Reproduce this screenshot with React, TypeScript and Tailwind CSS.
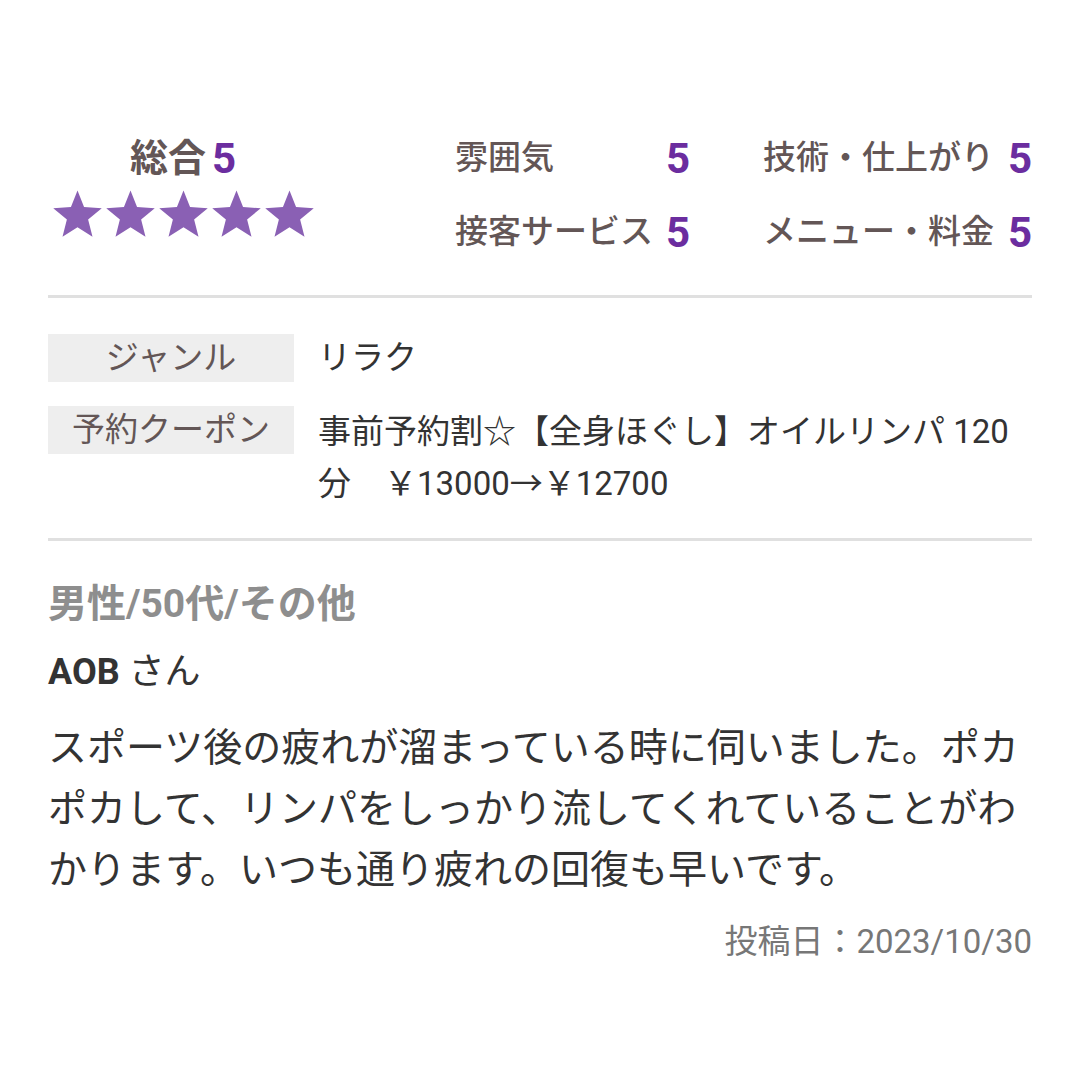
import React from "react";

const FONT = { fontFamily: "Roboto, 'Noto Sans CJK JP', sans-serif" };

function Star() {
  return (
    <svg width="51" height="51" viewBox="0 0 48 48" className="block">
      <polygon
        fill="#8a60b4"
        points="24,1.5 30.17,17.01 46.83,18.08 33.99,28.74 38.11,44.92 24,36 9.89,44.92 14.01,28.74 1.17,18.08 17.83,17.01"
      />
    </svg>
  );
}

function Score({ label }: { label: string }) {
  return (
    <div className="flex h-[48px] items-center justify-between">
      <span className="text-[33px] font-medium text-[#635656]">{label}</span>
      <span className="text-[42px] font-bold text-[#6b2d9f]">5</span>
    </div>
  );
}

export default function App() {
  return (
    <div className="min-h-[1080px] w-[1080px] bg-white px-[48px] pt-[134px]" style={FONT}>
      <div className="flex items-start">
        <div className="flex w-[270px] flex-col items-center">
          <div className="flex h-[48px] items-center">
            <span className="text-[38px] font-bold text-[#635656]">総合</span>
            <span className="ml-[6px] text-[42px] font-bold text-[#6b2d9f]">5</span>
          </div>
          <div className="mt-[7px] flex gap-[2px]">
            <Star />
            <Star />
            <Star />
            <Star />
            <Star />
          </div>
        </div>
        <div className="ml-[137px] grid grid-cols-[235px_269px] gap-x-[73px] gap-y-[26px]">
          <Score label="雰囲気" />
          <Score label="技術・仕上がり" />
          <Score label="接客サービス" />
          <Score label="メニュー・料金" />
        </div>
      </div>

      <div className="mt-[39px] h-[3px] bg-[#e0e0e0]" />

      <div className="mt-[36px] flex flex-col gap-[24px]">
        <div className="flex items-start gap-[24px]">
          <div className="h-[48px] w-[246px] shrink-0 bg-[#eeeeee] text-center text-[33px] leading-[48px] text-[#635656]">
            ジャンル
          </div>
          <div className="text-[33px] leading-[48px] text-[#333333]">リラク</div>
        </div>
        <div className="flex items-start gap-[24px]">
          <div className="h-[48px] w-[246px] shrink-0 bg-[#eeeeee] text-center text-[33px] leading-[48px] text-[#635656]">
            予約クーポン
          </div>
          <div className="text-[33px] leading-[52px] text-[#333333]">
            事前予約割☆【全身ほぐし】オイルリンパ 120分　￥13000→￥12700
          </div>
        </div>
      </div>

      <div className="mt-[28px] h-[3px] bg-[#e0e0e0]" />

      <div className="mt-[39px] text-[39px] font-bold leading-[48px] text-[#8e8e8e]">男性/50代/その他</div>
      <div className="mt-[20px] text-[36px] leading-[48px] text-[#333333]">
        <span className="font-bold">AOB</span> さん
      </div>
      <div className="mt-[22px] text-[39px] leading-[61px] text-[#333333]">
        スポーツ後の疲れが溜まっている時に伺いました。ポカポカして、リンパをしっかり流してくれていることがわかります。いつも通り疲れの回復も早いです。
      </div>
      <div className="mt-[19px] text-right text-[33px] leading-[44px] text-[#777777]">投稿日：2023/10/30</div>
    </div>
  );
}
